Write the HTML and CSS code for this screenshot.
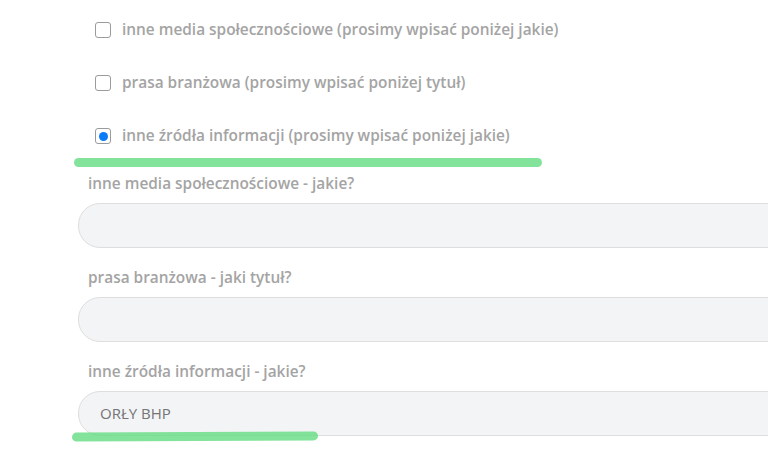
FILE: index.html
```html
<!DOCTYPE html>
<html lang="pl">
<head>
<meta charset="utf-8">
<link rel="stylesheet" href="styles.css">
</head>
<body>
<div class="page">
  <div class="options">
    <label class="opt"><span class="box"></span><span class="opt-text">inne media społecznościowe (prosimy wpisać poniżej jakie)</span></label>
    <label class="opt"><span class="box"></span><span class="opt-text">prasa branżowa (prosimy wpisać poniżej tytuł)</span></label>
    <label class="opt"><span class="box checked"></span><span class="opt-text">inne źródła informacji (prosimy wpisać poniżej jakie)</span></label>
  </div>
  <div class="fields">
    <div class="field">
      <div class="field-label">inne media społecznościowe - jakie?</div>
      <div class="input"></div>
    </div>
    <div class="field">
      <div class="field-label">prasa branżowa - jaki tytuł?</div>
      <div class="input"></div>
    </div>
    <div class="field">
      <div class="field-label">inne źródła informacji - jakie?</div>
      <div class="input">ORŁY BHP</div>
    </div>
  </div>
  <div class="mark mark1"></div>
  <div class="mark mark2"></div>
</div>
</body>
</html>
```
FILE: styles.css
```css
html, body {
  margin: 0;
  padding: 0;
  background: #fff;
  overflow: hidden;
}
.page {
  position: relative;
  width: 768px;
  height: 449px;
  overflow: hidden;
  font-family: "Open Sans", "Noto Sans", sans-serif;
}
.options {
  display: flex;
  flex-direction: column;
  gap: 31px;
  padding: 19px 0 0 95px;
}
.opt {
  display: flex;
  align-items: center;
  gap: 11px;
  height: 22px;
}
.box {
  width: 14px;
  height: 14px;
  border: 1px solid #9b9b9b;
  border-radius: 3px;
  background: #fff;
  display: flex;
  align-items: center;
  justify-content: center;
  box-sizing: content-box;
}
.box.checked::after {
  content: "";
  width: 9px;
  height: 9px;
  border-radius: 50%;
  background: #0a7cf7;
}
.opt-text {
  font-size: 15.4px;
  font-weight: 600;
  color: #a4a4a4;
  line-height: 22px;
}
.fields {
  display: flex;
  flex-direction: column;
  gap: 19px;
  padding: 26px 0 0 78px;
}
.field {
  display: flex;
  flex-direction: column;
  gap: 8px;
}
.field-label {
  padding-left: 10px;
  font-size: 15.4px;
  font-weight: 600;
  color: #a4a4a4;
  line-height: 22px;
}
.input {
  width: 760px;
  height: 43px;
  border: 1px solid #dedede;
  border-radius: 22px;
  background: #f3f4f6;
  padding-left: 21px;
  box-sizing: content-box;
  font-size: 15px;
  color: #757575;
  line-height: 43px;
}
.mark {
  position: absolute;
  height: 9px;
  border-radius: 5px;
  background: rgba(100, 220, 130, 0.8);
}
.mark1 {
  left: 74px;
  top: 158px;
  width: 468px;
}
.mark2 {
  left: 72px;
  top: 432px;
  width: 246px;
  transform: rotate(-0.3deg);
}
```
